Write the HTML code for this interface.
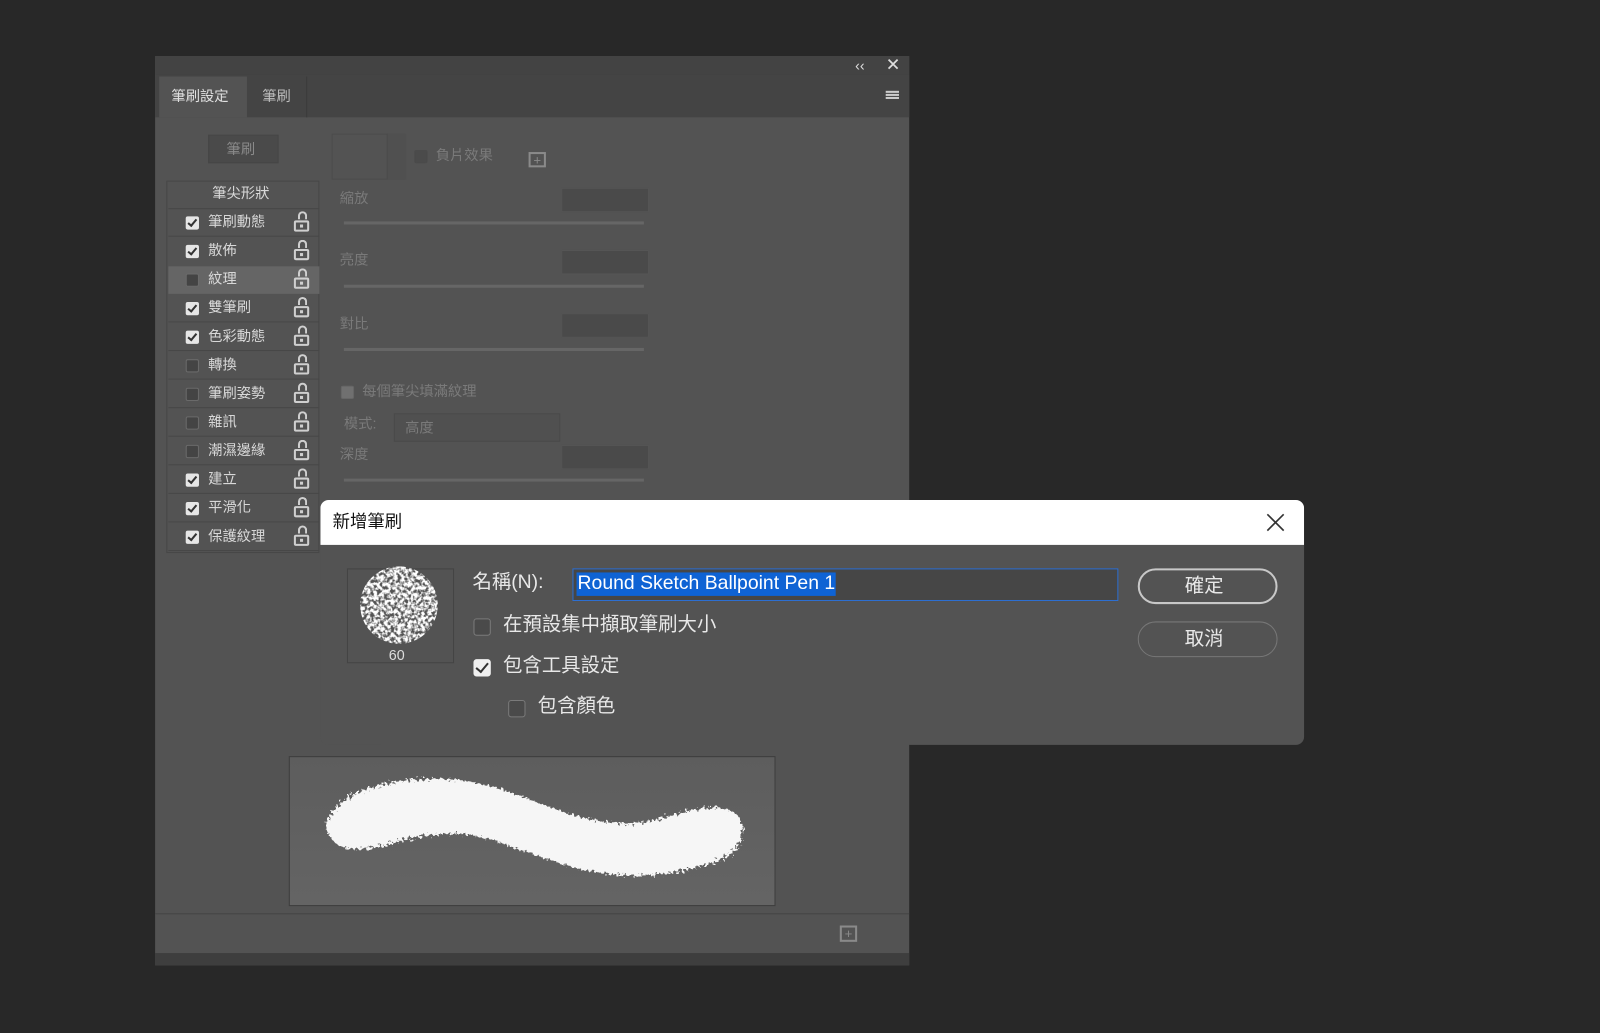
<!DOCTYPE html>
<html><head><meta charset="utf-8"><style>
html,body{margin:0;padding:0;background:#282828;overflow:hidden;width:1600px;height:1033px}
#w{position:absolute;left:0;top:0;width:1568px;height:1012px;transform:scale(1.020408);transform-origin:0 0;font-family:"Liberation Sans","Noto Sans CJK TC",sans-serif}
.a{position:absolute}
.t{position:absolute;color:#d8d8d8;font-size:14px;line-height:16px;white-space:nowrap}
.dim{color:#7a7a7a}
.cb{position:absolute;width:11px;height:11px;border-radius:2px;background:#444;border:1px solid #6a6a6a}
.cb.on{background:#e6e6e6;border-color:#e6e6e6}
.cb.on:after{content:"";position:absolute;left:3px;top:0px;width:3px;height:7px;border:solid #333;border-width:0 2px 2px 0;transform:rotate(40deg)}
.lk{position:absolute;left:288px;width:15px;height:11px;border:2px solid #cfcfcf;border-radius:2px;box-sizing:border-box}
.lk:before{content:"";position:absolute;left:2px;top:-9px;width:9px;height:8px;border:2px solid #cfcfcf;border-bottom:none;border-radius:5px 5px 0 0;box-sizing:border-box;transform:translateY(-2px)}
.lk:after{content:"";position:absolute;left:4px;top:2px;width:3px;height:3px;background:#cfcfcf}
.inp{position:absolute;left:550px;width:84px;height:22px;background:#4a4a4a;border:1px solid #555}
.sl{position:absolute;left:337px;width:294px;height:3px;background:#666}
.dt{position:absolute;font-size:19px;color:#e8e8e8;line-height:22px;white-space:nowrap}
.dcb{position:absolute;width:17px;height:17px;border:1px solid #7a7a7a;border-radius:3px;background:#4a4a4a;box-sizing:border-box}
</style></head><body><div id="w">
<div class="a" style="left:152px;top:55px;width:739px;height:891px;background:#535353"></div>
<div class="a" style="left:152px;top:55px;width:739px;height:18px;background:#434343"></div>
<div class="a" style="left:152px;top:73px;width:739px;height:42px;background:#444"></div>
<div class="a" style="left:156px;top:75px;width:86px;height:40px;background:#535353"></div>
<div class="a" style="left:243px;top:75px;width:57px;height:40px;border-right:1px solid #3c3c3c"></div>
<div class="t" style="left:168px;top:86px;color:#e0e0e0">筆刷設定</div>
<div class="t" style="left:257px;top:86px;color:#bdbdbd">筆刷</div>
<div class="t" style="left:838px;top:56px;font-size:14px;color:#ddd">‹‹</div>
<div class="t" style="left:868px;top:56px;font-size:17px;color:#ddd">✕</div>
<div class="a" style="left:868px;top:89px;width:13px;height:2px;background:#ccc;box-shadow:0 3px 0 #ccc,0 6px 0 #ccc"></div>
<div class="a" style="left:204px;top:132px;width:69px;height:28px;background:#4a4a4a;border:1px solid #464646;box-sizing:border-box"></div>
<div class="t dim" style="left:222px;top:138px;color:#8a8a8a">筆刷</div>
<div class="a" style="left:163px;top:177px;width:150px;height:365px;border:1px solid #474747;box-sizing:border-box"></div>
<div class="t" style="left:208px;top:181px">筆尖形狀</div>
<div class="a" style="left:165px;top:204px;width:148px;height:1px;background:#474747"></div>
<div class="a" style="left:165px;top:261px;width:148px;height:27px;background:#656565"></div>
<div id="rows"></div>
<div class="a" style="left:325px;top:131px;width:72px;height:45px;border:1px solid #4c4c4c;box-sizing:border-box"></div>
<div class="a" style="left:379px;top:131px;width:18px;height:45px;border-left:1px solid #4a4a4a;background:#505050"></div>
<div class="cb" style="left:406px;top:147px;background:#4b4b4b;border-color:#4b4b4b"></div>
<div class="t dim" style="left:427px;top:144px">負片效果</div>
<div class="a" style="left:518px;top:149px;width:17px;height:15px;border:2px solid #8a8a8a;box-sizing:border-box;color:#8a8a8a;font-size:13px;line-height:11px;text-align:center">+</div>
<div class="t dim" style="left:333px;top:186px">縮放</div><div class="inp" style="top:184px"></div><div class="sl" style="top:217px"></div>
<div class="t dim" style="left:333px;top:246px">亮度</div><div class="inp" style="top:245px"></div><div class="sl" style="top:279px"></div>
<div class="t dim" style="left:333px;top:309px">對比</div><div class="inp" style="top:307px"></div><div class="sl" style="top:341px"></div>
<div class="cb" style="left:334px;top:378px;background:#707070;border-color:#666"></div>
<div class="t dim" style="left:355px;top:375px">每個筆尖填滿紋理</div>
<div class="t dim" style="left:337px;top:407px">模式:</div>
<div class="a" style="left:386px;top:405px;width:163px;height:28px;background:#505050;border:1px solid #4a4a4a;box-sizing:border-box"></div>
<div class="t dim" style="left:397px;top:411px">高度</div>
<div class="t dim" style="left:333px;top:437px">深度</div><div class="inp" style="top:436px"></div><div class="sl" style="top:469px"></div>
<div class="a" style="left:283px;top:741px;width:477px;height:147px;background:linear-gradient(#5d5d5d,#646464);border:1px solid #3e3e3e;box-sizing:border-box"></div>
<svg class="a" style="left:0;top:0" width="1568" height="1012"><defs><filter id="r" x="-10%" y="-30%" width="120%" height="160%"><feTurbulence type="fractalNoise" baseFrequency="0.35" numOctaves="2" seed="3"/><feDisplacementMap in="SourceGraphic" scale="10"/></filter></defs>
<path filter="url(#r)" fill="#f6f6f6" d="M320,805 C330,785 350,772 390,766 C430,760 470,764 510,780 C550,795 590,812 630,806 C670,798 700,782 722,798 C735,815 727,835 700,845 C660,858 620,862 580,854 C540,847 510,830 470,820 C430,812 400,822 370,830 C340,836 320,830 320,805Z"/></svg>
<div class="a" style="left:152px;top:895px;width:739px;height:1px;background:#444"></div>
<div class="a" style="left:823px;top:907px;width:17px;height:16px;border:2px solid #8a8a8a;box-sizing:border-box;color:#8a8a8a;font-size:13px;line-height:12px;text-align:center">+</div>
<div class="a" style="left:152px;top:934px;width:739px;height:12px;background:#3e3e3e"></div>
<div class="a" style="left:314px;top:490px;width:964px;height:240px;background:#535353;border-radius:8px;overflow:hidden">
<div class="a" style="left:0;top:0;width:964px;height:44px;background:#fff"></div>
</div>
<div class="dt" style="left:326px;top:501px;color:#111;font-size:17px">新增筆刷</div>
<svg class="a" style="left:1241px;top:503px" width="18" height="18"><path d="M1,1L17,17M17,1L1,17" stroke="#333" stroke-width="1.6"/></svg>
<div class="a" style="left:340px;top:557px;width:105px;height:93px;border:1px solid #444;box-sizing:border-box"></div>
<svg class="a" style="left:350px;top:555px" width="84" height="78"><defs><filter id="s"><feTurbulence type="fractalNoise" baseFrequency="0.3" numOctaves="2" seed="5"/><feColorMatrix values="0 0 0 0 1 0 0 0 0 1 0 0 0 0 1 0 0 0 4 -1.4"/><feComposite in2="SourceGraphic" operator="in"/></filter></defs><circle cx="41" cy="38" r="38" fill="#fff" filter="url(#s)"/></svg>
<div class="t" style="left:381px;top:634px;font-size:14px;color:#ddd">60</div>
<div class="dt" style="left:463px;top:560px">名稱(N):</div>
<div class="a" style="left:561px;top:557px;width:535px;height:32px;background:#464646;border:1px solid #2d6fd1;box-sizing:border-box"></div>
<div class="a" style="left:565px;top:561px;width:254px;height:23px;background:#0f63d4"></div>
<div class="dt" style="left:566px;top:561px;color:#fff">Round Sketch Ballpoint Pen 1</div>
<div class="dcb" style="left:464px;top:606px"></div>
<div class="dt" style="left:493px;top:602px">在預設集中擷取筆刷大小</div>
<div class="dcb" style="left:464px;top:646px;background:#f0f0f0;border-color:#f0f0f0"></div>
<div class="a" style="left:469px;top:647px;width:5px;height:10px;border:solid #333;border-width:0 2px 2px 0;transform:rotate(40deg)"></div>
<div class="dt" style="left:493px;top:642px">包含工具設定</div>
<div class="dcb" style="left:498px;top:686px"></div>
<div class="dt" style="left:527px;top:682px">包含顏色</div>
<div class="a" style="left:1115px;top:557px;width:137px;height:35px;border:2px solid #c8c8c8;border-radius:18px;box-sizing:border-box"></div>
<div class="dt" style="left:1161px;top:564px">確定</div>
<div class="a" style="left:1115px;top:609px;width:137px;height:35px;border:1px solid #777;border-radius:18px;box-sizing:border-box"></div>
<div class="dt" style="left:1161px;top:616px">取消</div>
</div>
<script>
var items=[["筆刷動態",1],["散佈",1],["紋理",0],["雙筆刷",1],["色彩動態",1],["轉換",0],["筆刷姿勢",0],["雜訊",0],["潮濕邊緣",0],["建立",1],["平滑化",1],["保護紋理",1]];
var h="";items.forEach(function(it,i){var y=218+i*28;
h+='<div class="cb'+(it[1]?' on':'')+'" style="left:182px;top:'+(y-6)+'px"></div>';
h+='<div class="t" style="left:204px;top:'+(y-9)+'px">'+it[0]+'</div>';
h+='<div class="lk" style="top:'+(y-2)+'px"></div>';
if(i!=1&&i!=2)h+='<div class="a" style="left:165px;top:'+(y+13)+'px;width:148px;height:1px;background:#474747"></div>';});
document.getElementById("rows").outerHTML=h;
</script>
</body></html>
